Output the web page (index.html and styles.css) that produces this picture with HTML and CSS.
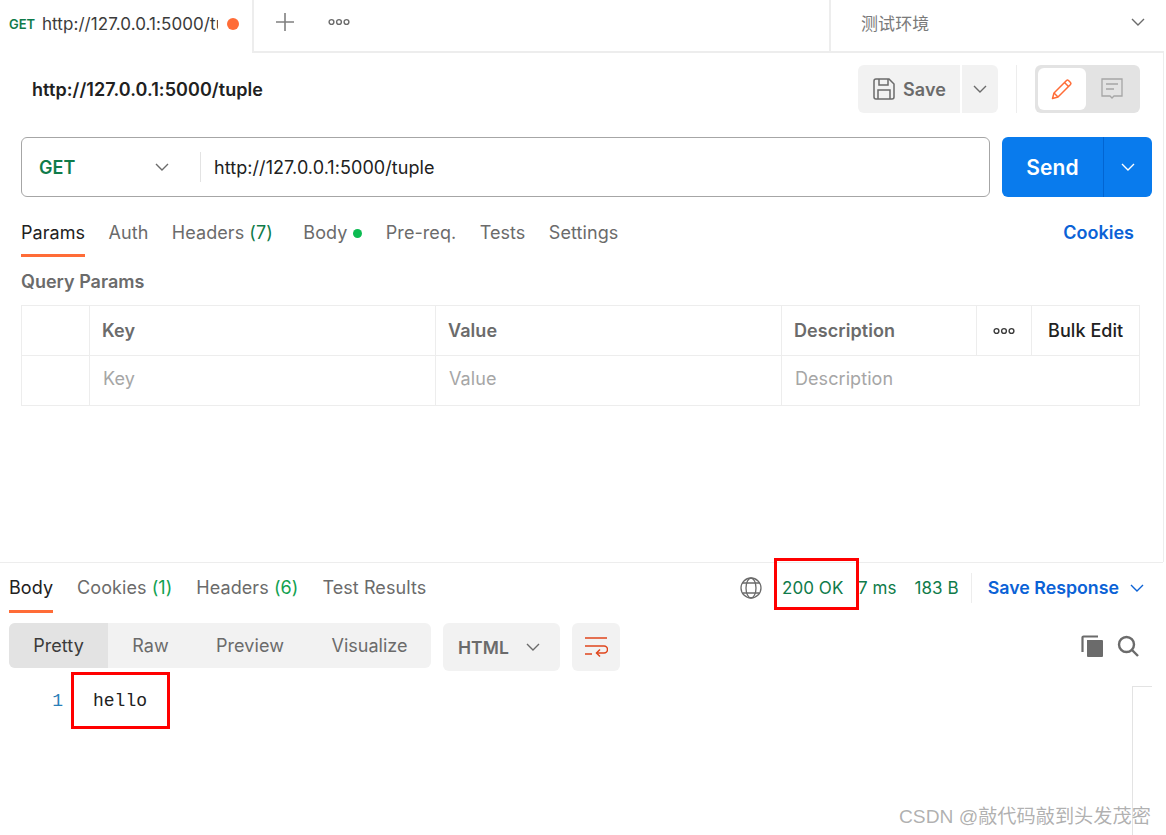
FILE: index.html
```html
<!DOCTYPE html>
<html lang="zh">
<head>
<meta charset="utf-8">
<title>Postman</title>
<link rel="stylesheet" href="styles.css">
</head>
<body>
<div class="app">
  <header class="tabbar">
    <div class="tab-active">
      <span class="tab-method">GET</span>
      <span class="tab-url">http://127.0.0.1:5000/tuple</span>
      <span class="tab-dot"></span>
    </div>
    <div class="tab-tools">
      <svg class="icon-plus" width="20" height="20" viewBox="0 0 20 20"><path d="M10 1v18M1 10h18" stroke="#808080" stroke-width="1.6" fill="none"/></svg>
      <svg class="icon-dots" width="22" height="8" viewBox="0 0 22 8"><g fill="none" stroke="#6b6b6b" stroke-width="1.4"><circle cx="3.5" cy="4" r="2.4"/><circle cx="11" cy="4" r="2.4"/><circle cx="18.5" cy="4" r="2.4"/></g></svg>
    </div>
    <div class="env">
      <span>测试环境</span>
      <svg width="14" height="8" viewBox="0 0 14 8"><path d="M1 1l6 6 6-6" stroke="#6b6b6b" stroke-width="1.4" fill="none"/></svg>
    </div>
  </header>

  <main class="main">
    <div class="title-row">
      <div class="title">http://127.0.0.1:5000/tuple</div>
      <div class="title-actions">
        <button class="save">
          <svg width="22" height="22" viewBox="0 0 22 22"><g fill="none" stroke="#6b6b6b" stroke-width="1.5"><path d="M1 3a2 2 0 0 1 2-2h13l5 5v13a2 2 0 0 1-2 2H3a2 2 0 0 1-2-2z"/><path d="M6 1v6h9V1M5 21v-9h12v9"/></g></svg>
          <span>Save</span>
        </button>
        <button class="save-more">
          <svg width="14" height="8" viewBox="0 0 14 8"><path d="M1 1l6 6 6-6" stroke="#6b6b6b" stroke-width="1.4" fill="none"/></svg>
        </button>
        <div class="vsep"></div>
        <div class="mode">
          <div class="mode-on">
            <svg width="22" height="22" viewBox="0 0 22 22"><g fill="none" stroke="#ff6c37" stroke-width="1.5" stroke-linejoin="round"><path d="M1.500 20.500l1.500-5.500L15.500 2.500a1.500 1.500 0 0 1 2 0l2 2a1.500 1.500 0 0 1 0 2L7 19z"/><path d="M13.500 4.500l4 4M3 15l4 4"/></g></svg>
          </div>
          <div class="mode-off">
            <svg width="22" height="22" viewBox="0 0 22 22"><g fill="none" stroke="#a6a6a6" stroke-width="1.3"><path d="M1 1h20v17h-8l-2 2-2-2H1z"/><path d="M5 6h12M5 11h8"/></g></svg>
          </div>
        </div>
      </div>
    </div>

    <div class="url-row">
      <div class="url-box">
        <div class="method">
          <span>GET</span>
          <svg width="14" height="8" viewBox="0 0 14 8"><path d="M1 1l6 6 6-6" stroke="#6b6b6b" stroke-width="1.4" fill="none"/></svg>
        </div>
        <div class="url-text">http://127.0.0.1:5000/tuple</div>
      </div>
      <div class="send">
        <span class="send-label">Send</span>
        <span class="send-more"><svg width="14" height="8" viewBox="0 0 14 8"><path d="M1 1l6 6 6-6" stroke="#fff" stroke-width="1.4" fill="none"/></svg></span>
      </div>
    </div>

    <nav class="req-tabs">
      <span class="rtab rtab-on">Params</span>
      <span class="rtab">Auth</span>
      <span class="rtab">Headers <em>(7)</em></span>
      <span class="rtab">Body <i class="green-dot"></i></span>
      <span class="rtab">Pre-req.</span>
      <span class="rtab">Tests</span>
      <span class="rtab">Settings</span>
      <span class="rtab cookies">Cookies</span>
    </nav>

    <div class="query-title">Query Params</div>

    <div class="table">
      <div class="tr tr-head">
        <div class="td c0"></div>
        <div class="td c1">Key</div>
        <div class="td c2">Value</div>
        <div class="td c3">Description</div>
        <div class="td c4"><svg width="22" height="8" viewBox="0 0 22 8"><g fill="none" stroke="#3b3b3b" stroke-width="1.4"><circle cx="3.500" cy="4" r="2.400"/><circle cx="11" cy="4" r="2.400"/><circle cx="18.500" cy="4" r="2.400"/></g></svg></div>
        <div class="td c5">Bulk Edit</div>
      </div>
      <div class="tr tr-body">
        <div class="td c0"></div>
        <div class="td c1">Key</div>
        <div class="td c2">Value</div>
        <div class="td c3w">Description</div>
      </div>
    </div>
  </main>

  <section class="response">
    <div class="res-head">
      <span class="ptab ptab-on">Body</span>
      <span class="ptab">Cookies <em>(1)</em></span>
      <span class="ptab">Headers <em>(6)</em></span>
      <span class="ptab">Test Results</span>
      <div class="res-meta">
        <svg width="22" height="22" viewBox="0 0 22 22"><g fill="none" stroke="#6b6b6b" stroke-width="1.3"><circle cx="11" cy="11" r="10"/><ellipse cx="11" cy="11" rx="5" ry="10"/><path d="M2.500 6h17M2.500 16h17"/></g></svg>
        <span class="st st-200">200 OK</span>
        <span class="st st-ms">7 ms</span>
        <span class="st st-size">183 B</span>
        <span class="meta-sep"></span>
        <span class="save-res">Save Response</span>
        <svg width="14" height="8" viewBox="0 0 14 8"><path d="M1 1l6 6 6-6" stroke="#0b62d6" stroke-width="1.4" fill="none"/></svg>
      </div>
    </div>
    <div class="res-tools">
      <div class="seg">
        <span class="seg-item seg-on">Pretty</span>
        <span class="seg-item seg-raw">Raw</span>
        <span class="seg-item seg-prev">Preview</span>
        <span class="seg-item seg-vis">Visualize</span>
      </div>
      <div class="lang">
        <span>HTML</span>
        <svg width="14" height="8" viewBox="0 0 14 8"><path d="M1 1l6 6 6-6" stroke="#6b6b6b" stroke-width="1.4" fill="none"/></svg>
      </div>
      <div class="wrap-btn">
        <svg width="24" height="22" viewBox="0 0 24 22"><g fill="none" stroke="#e0461d" stroke-width="1.500"><path d="M1 2h22M1 10h19a3.500 3.500 0 0 1 0 7h-7M1 18h7"/><path d="M16 13.500L12.500 17l3.500 3.500"/></g></svg>
      </div>
      <div class="res-icons">
        <svg width="22" height="22" viewBox="0 0 22 22"><path d="M6 5h15a1 1 0 0 1 1 1v15a1 1 0 0 1-1 1H7a1 1 0 0 1-1-1z" fill="#6b6b6b"/><path d="M1.500 17V2.500a1 1 0 0 1 1-1H17" fill="none" stroke="#6b6b6b" stroke-width="2.200"/></svg>
        <svg width="22" height="22" viewBox="0 0 22 22"><g fill="none" stroke="#6b6b6b" stroke-width="2.400"><circle cx="9.500" cy="9.500" r="7.500"/><path d="M15 15l6 6"/></g></svg>
      </div>
    </div>
    <div class="code">
      <span class="ln">1</span>
      <span class="code-text">hello</span>
      <div class="gutter"></div>
    </div>
  </section>
</div>

<div class="mark mark-status"></div>
<div class="mark mark-hello"></div>
<div class="watermark">CSDN @敲代码敲到头发茂密</div>
</body>
</html>
```
FILE: styles.css
```css
* { box-sizing: border-box; }
html, body { margin: 0; padding: 0; height: 100%; background: #fff; overflow: hidden; }
body { font-family: Inter, "Noto Sans CJK SC", sans-serif; font-size: 18px; letter-spacing: .07px; color: #6b6b6b; position: relative; }
button { font: inherit; letter-spacing: inherit; border: 0; padding: 0; color: inherit; }
em { font-style: normal; color: #0f7b4a; }

.app { width: 1164px; height: 835px; display: flex; flex-direction: column; }

.tabbar { height: 53px; display: flex; flex: none; }
.tab-active { width: 254px; display: flex; align-items: center; padding: 0 14px 5px 9px; border-right: 2px solid #ededed; }
.tab-method { font-size: 13px; letter-spacing: 0; font-weight: 600; color: #0f7b4a; width: 33px; flex: none; }
.tab-url { font-size: 17px; color: #3b3b3b; width: 176px; overflow: hidden; white-space: nowrap; flex: none; }
.tab-dot { width: 12px; height: 12px; border-radius: 50%; background: #ff6c37; margin-left: 9px; flex: none; }
.tab-tools { width: 575px; display: flex; align-items: center; padding: 0 0 7px 21px; gap: 33px; border-bottom: 2px solid #ededed; }
.env { flex: 1; display: flex; align-items: center; justify-content: space-between; padding: 0 19px 7px 30px; border-left: 2px solid #ededed; border-bottom: 2px solid #ededed; font-size: 17px; color: #7a7a7a; }

.main { flex: none; height: 509px; padding: 12px 11px 0 21px; border-right: 1px solid #ededed; }
.title-row { display: flex; justify-content: space-between; align-items: center; height: 48px; }
.title { font-weight: 600; font-size: 18px; color: #212121; margin-left: 11px; }
.title-actions { display: flex; align-items: center; margin-right: 12px; }
.save { width: 102px; height: 48px; background: #f2f2f2; border-radius: 6px 0 0 6px; display: flex; align-items: center; gap: 8px; padding-left: 15px; font-weight: 600; font-size: 18px; }
.save-more { width: 36px; height: 48px; background: #f2f2f2; margin-left: 2px; border-radius: 0 6px 6px 0; display: flex; align-items: center; justify-content: center; }
.vsep { width: 1px; height: 48px; background: #ededed; margin: 0 18px; }
.mode { width: 105px; height: 48px; background: #e3e3e3; border-radius: 6px; padding: 3px; display: flex; }
.mode-on { width: 48px; height: 42px; background: #fff; border-radius: 6px; display: flex; align-items: center; justify-content: center; }
.mode-off { flex: 1; display: flex; align-items: center; justify-content: center; }

.url-row { display: flex; gap: 12px; margin-top: 24px; height: 60px; }
.url-box { width: 969px; height: 60px; border: 1px solid #a6a6a6; border-radius: 6px; display: flex; align-items: center; }
.method { width: 179px; height: 30px; border-right: 1px solid #e3e3e3; display: flex; align-items: center; justify-content: space-between; padding: 0 31px 0 17px; font-weight: 600; color: #0f7b4a; }
.url-text { margin-left: 13px; color: #212121; font-size: 18px; }
.send { width: 150px; height: 60px; background: #097bed; border-radius: 6px; color: #fff; display: flex; align-items: center; font-weight: 600; font-size: 21px; }
.send-label { width: 102px; height: 100%; display: flex; align-items: center; justify-content: center; border-right: 1px solid #0265d2; }
.send-more { flex: 1; display: flex; align-items: center; justify-content: center; }

.req-tabs { display: flex; margin-top: 14px; height: 46px; align-items: center; padding-right: 18px; color: #6b6b6b; }
.rtab { margin-right: 23.400px; height: 46px; display: flex; align-items: center; gap: 5px; padding-bottom: 3px; white-space: nowrap; }
.rtab:nth-child(3) { margin-right: 30.500px; }
.rtab:nth-child(4) { gap: 6px; }
.rtab-on { color: #212121; border-bottom: 3px solid #ff6c37; padding-bottom: 0; }
.cookies { margin: 0 0 0 auto; color: #0b62d6; font-weight: 600; letter-spacing: 0; }
.green-dot { width: 9px; height: 9px; border-radius: 50%; background: #0cbb52; margin-top: 2px; }

.query-title { margin-top: 14px; font-weight: 600; font-size: 18px; line-height: 22px; letter-spacing: 0; }

.table { width: 1119px; margin-top: 12px; border: 1px solid #ededed; }
.tr { display: flex; height: 50px; }
.tr-head { border-bottom: 1px solid #ededed; }
.tr-body { height: 49px; color: #a6a6a6; }
.td { display: flex; align-items: center; border-right: 1px solid #ededed; padding: 0 12px; }
.tr-body .td { padding-bottom: 5px; }
.c0 { width: 68px; }
.c1 { width: 346px; }
.c2 { width: 346px; }
.c3 { width: 195px; }
.c4 { width: 55px; justify-content: center; padding: 0; }
.c5 { flex: 1; border-right: 0; padding: 0 0 0 16px; color: #212121; font-weight: 500; }
.c3w { flex: 1; border-right: 0; }
.tr-head .td:not(.c4):not(.c5) { font-weight: 600; }
.tr-body .c1, .tr-body .c2, .tr-body .c3w { padding-left: 13px; }

.response { flex: 1; border-top: 1px solid #ededed; padding-left: 9px; margin-right: 1px; min-height: 0; }
.res-head { display: flex; align-items: center; height: 49px; }
.ptab { margin-right: 24px; white-space: nowrap; }
.ptab em { color: #12a150; }
.ptab-on { color: #212121; position: relative; align-self: stretch; display: flex; align-items: center; }
.ptab-on::after { content: ""; position: absolute; left: 0; right: 0; bottom: -1px; height: 3px; background: #ff6c37; }
.res-meta { margin-left: auto; display: flex; align-items: center; padding-right: 19px; }
.st { color: #0f7b4a; white-space: nowrap; font-size: 17px; }
.st-200 { margin-left: 20px; width: 76px; }
.st-size { margin-left: 18px; }
.meta-sep { width: 1px; height: 30px; background: #ededed; margin: 0 16px 0 12px; }
.save-res { color: #0b62d6; font-weight: 600; font-size: 17.800px; letter-spacing: 0; margin-right: 11px; }

.res-tools { display: flex; margin-top: 11px; height: 48px; padding-right: 24px; }
.seg { width: 422px; height: 45px; background: #f2f2f2; border-radius: 6px; display: flex; overflow: hidden; }
.seg-item { display: flex; align-items: center; justify-content: center; }
.seg-on { width: 99px; background: #e3e3e3; color: #3b3b3b; }
.seg-raw { width: 85px; }
.seg-prev { width: 114px; }
.seg-vis { width: 124px; padding-left: 1px; letter-spacing: 0; }
.lang { width: 117px; height: 48px; margin-left: 12px; background: #f2f2f2; border-radius: 6px; display: flex; align-items: center; justify-content: space-between; padding: 0 20px 0 15px; font-weight: 600; font-size: 17.500px; }
.wrap-btn { width: 48px; height: 48px; margin-left: 12px; background: #f2f2f2; border-radius: 6px; display: flex; align-items: center; justify-content: center; }
.res-icons { margin-left: auto; display: flex; align-items: center; gap: 14px; height: 45px; }

.code { position: relative; height: 150px; margin-top: 15px; display: flex; padding-top: 2px; line-height: 26px; letter-spacing: 0; }
.ln { width: 54px; text-align: right; color: #2a7fb8; font-family: "Liberation Mono", monospace; }
.code-text { margin-left: 30px; color: #212121; font-family: "Liberation Mono", monospace; font-size: 18px; }
.gutter { position: absolute; left: 1123px; top: 0; bottom: 0; width: 20px; border-left: 1px solid #e3e3e3; border-top: 1px solid #e3e3e3; }

.mark { position: absolute; border: 3px solid #f00; }
.mark-status { left: 774px; top: 558px; width: 85px; height: 52px; }
.mark-hello { left: 71px; top: 672px; width: 99px; height: 57px; }
.watermark { position: absolute; left: 899px; top: 805px; font-family: "Liberation Sans", "Noto Sans CJK SC", sans-serif; font-size: 19.200px; line-height: 23px; letter-spacing: 0; color: rgba(110,110,110,.55); white-space: nowrap; }
```
